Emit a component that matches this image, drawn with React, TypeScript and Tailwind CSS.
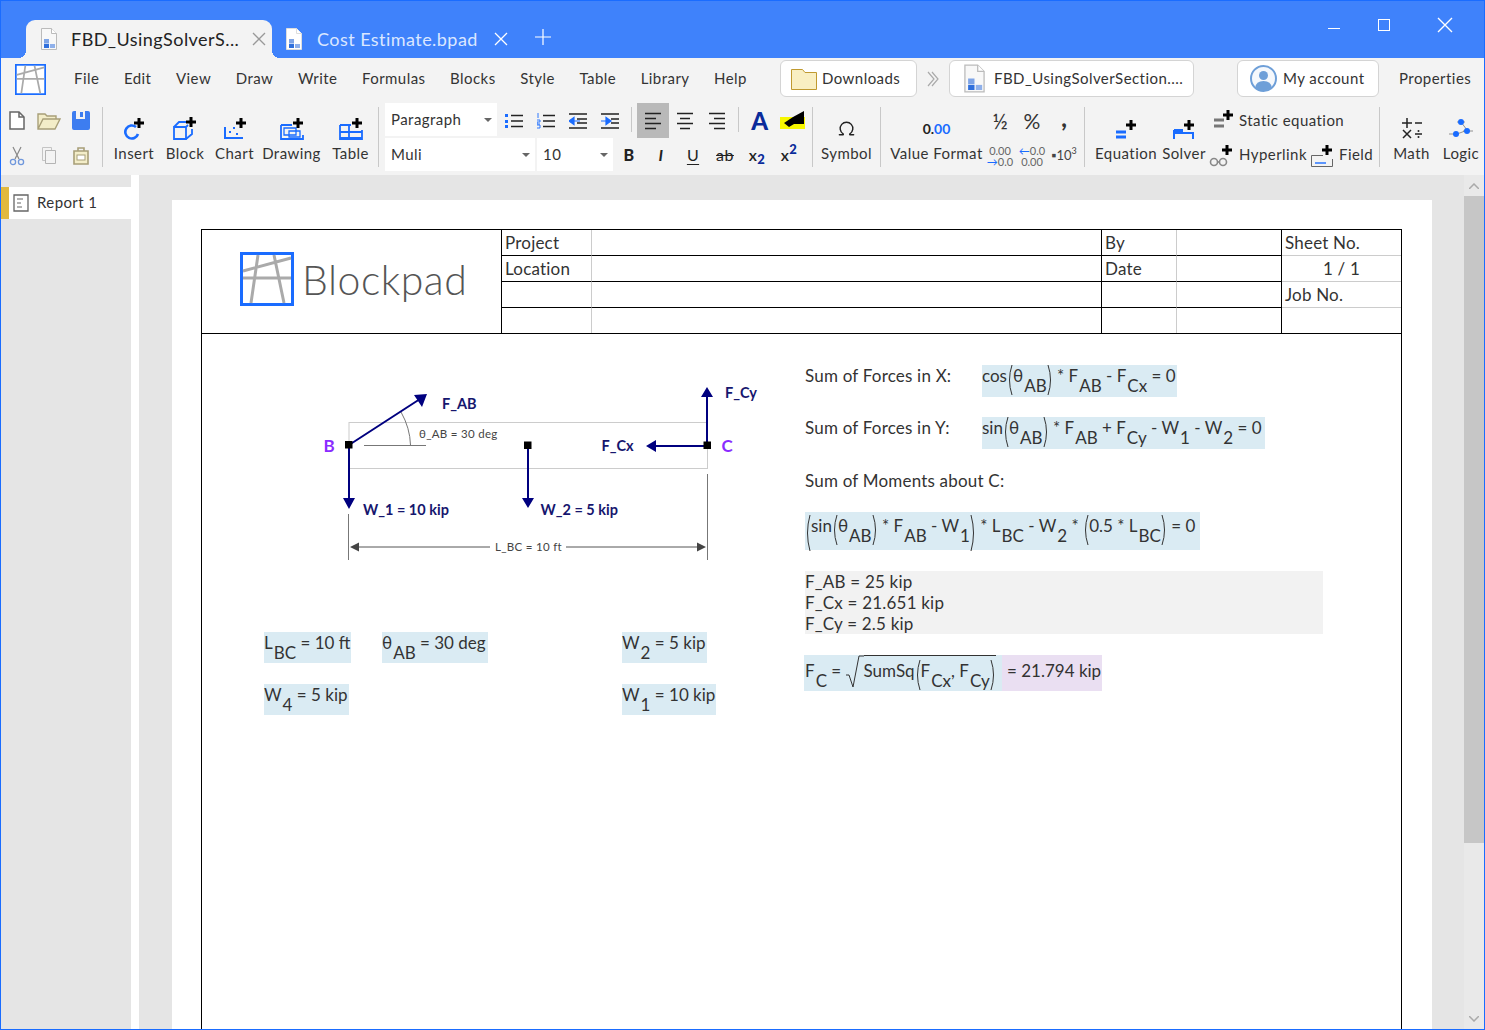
import type { ReactNode } from "react"
import { Omega } from "lucide-react"

const BLUE = "#1a6cff"

function Plus({ x, y, s = 10 }: { x: number; y: number; s?: number }) {
  return <path d={`M${x - s / 2} ${y}H${x + s / 2}M${x} ${y - s / 2}V${y + s / 2}`} stroke="#000" strokeWidth="3" fill="none" />
}

function Ico({ w = 24, h = 24, children }: { w?: number; h?: number; children: ReactNode }) {
  return (
    <svg width={w} height={h} viewBox={`0 0 ${w} ${h}`} fill="none" className="block shrink-0">
      {children}
    </svg>
  )
}

function DocIcon({ light = false, big = false }: { light?: boolean; big?: boolean }) {
  return (
    <svg width={big ? 23 : 18} height={big ? 29 : 22} viewBox="0 0 18 22" fill="none" className="block shrink-0">
      <path d="M1.5 .5H11.5L16.5 5.5V21.5H1.5Z" fill={light ? "#fff" : "#f8f8f8"} stroke={light ? "#ddd" : "#bbb"} />
      <path d="M11.5 .5V5.5H16.5" fill="#fff" stroke={light ? "#ddd" : "#bbb"} />
      <rect x="4" y="11" width="5" height="4.5" fill="#7ea4e6" />
      <rect x="4" y="16" width="5" height="4" fill="#2f6fdc" />
      <rect x="10" y="16" width="5" height="4" fill="#8fb0ea" />
    </svg>
  )
}

function LogoMark({ size }: { size: number }) {
  return (
    <svg width={size} height={size} viewBox="0 0 54 54" className="block shrink-0">
      <rect x="1.5" y="1.5" width="51" height="51" fill="#fff" stroke={BLUE} strokeWidth="3" />
      <g stroke="#aaa" strokeWidth="3" fill="none">
        <path d="M3 19L51 6M3 26H51M18 3L11 51M34 3L44 51" />
      </g>
    </svg>
  )
}

function Big({ w, label, icon }: { w: number; label: string; icon: ReactNode }) {
  return (
    <div className="flex flex-col items-center pt-[13px] shrink-0" style={{ width: w }}>
      <div className="flex h-[24px] items-center justify-center">{icon}</div>
      <div className="mt-[1px] h-[24px] text-[15px] leading-[24px] whitespace-nowrap text-[#333]">{label}</div>
    </div>
  )
}

function Cell({ w, active, children }: { w: number; active?: boolean; children: ReactNode }) {
  return (
    <div className={`flex h-[35px] shrink-0 items-center justify-center ${active ? "bg-[#b9b9b9]" : ""}`} style={{ width: w }}>
      {children}
    </div>
  )
}

function Lines({ kind }: { kind: "left" | "center" | "right" }) {
  const d = {
    left: "M0 1.5H16M0 6.5H11M0 11.5H16M0 16.5H11",
    center: "M0 1.5H16M3 6.5H13M0 11.5H16M3 16.5H13",
    right: "M0 1.5H16M5 6.5H16M0 11.5H16M5 16.5H16",
  }[kind]
  return (
    <Ico w={16} h={18}>
      <path d={d} stroke="#222" strokeWidth="1.5" />
    </Ico>
  )
}

function Select({ w, label }: { w: number; label: string }) {
  return (
    <div className="flex h-[33px] shrink-0 items-center justify-between bg-white pl-[6px] pr-[5px] text-[15px] text-[#333]" style={{ width: w }}>
      <span>{label}</span>
      <span className="h-0 w-0 border-x-[4px] border-t-[4px] border-x-transparent border-t-[#666]" />
    </div>
  )
}

function Sep({ short }: { short?: boolean }) {
  return <div className={`w-px shrink-0 bg-[#c8c8c8] ${short ? "mt-[4px] h-[25px]" : "mt-[4px] h-[60px]"}`} />
}

function Toolbar() {
  return (
    <div className="flex h-[72px] bg-[#f3f3f3]">
      {/* file actions */}
      <div className="grid w-[101px] shrink-0 grid-cols-[32px_32px_32px] grid-rows-[35px_35px] content-start pl-0">
        <div className="flex items-center justify-center">
          <Ico w={16} h={19}>
            <path d="M1 1H10L15 6V18H1Z" fill="#fff" stroke="#666" strokeWidth="1.5" />
            <path d="M10 1V6H15" stroke="#666" strokeWidth="1.5" />
          </Ico>
        </div>
        <div className="flex items-center justify-center">
          <Ico w={24} h={18}>
            <path d="M1 17V2H8L10 4H19V7H6L1 17L6 7H23L18 17Z" fill="#f3edc8" stroke="#a89f78" strokeWidth="1.4" />
          </Ico>
        </div>
        <div className="flex items-center justify-center">
          <Ico w={18} h={19}>
            <path d="M0 2Q0 0 2 0H4V8H13V0H16Q18 0 18 2V17Q18 19 16 19H2Q0 19 0 17Z" fill="#3d7df0" />
            <rect x="8" y="1" width="3" height="5" fill="#3d7df0" />
          </Ico>
        </div>
        <div className="flex items-center justify-center">
          <Ico w={16} h={20}>
            <path d="M4 1L10 13M12 1L6 13" stroke="#888" strokeWidth="1.2" />
            <circle cx="4" cy="16" r="2.6" stroke="#6f97dc" strokeWidth="1.3" />
            <circle cx="12" cy="16" r="2.6" stroke="#6f97dc" strokeWidth="1.3" />
          </Ico>
        </div>
        <div className="flex items-center justify-center">
          <Ico w={14} h={17}>
            <path d="M.5 .5H9.5V13.5H.5Z" stroke="#c4c4c4" fill="#f3f3f3" />
            <path d="M3.5 3.5H13.5V16.5H3.5Z" stroke="#b4b4b4" fill="#f3f3f3" />
          </Ico>
        </div>
        <div className="flex items-center justify-center">
          <Ico w={16} h={18}>
            <path d="M1 4H15V17H1Z" fill="#f3edc8" stroke="#a89f78" strokeWidth="1.6" />
            <path d="M5 4V1H11V4" stroke="#a89f78" strokeWidth="1.6" />
            <rect x="4" y="8" width="8" height="5" fill="#fff" stroke="#a89f78" />
          </Ico>
        </div>
      </div>
      <Sep />
      {/* insert group */}
      <div className="flex w-[275px] shrink-0 pl-[5px]">
        <Big w={52} label="Insert" icon={
          <Ico w={24} h={24}>
            <path d="M14 11A6.5 6.5 0 1 0 16 18" stroke={BLUE} strokeWidth="2.6" />
            <Plus x={17} y={7} />
          </Ico>
        } />
        <Big w={50} label="Block" icon={
          <Ico w={24} h={24}>
            <path d="M1 11H13V23H1ZM1 11L6 6H14M13 11L15 9M13 23L19 18V13" stroke={BLUE} strokeWidth="1.8" />
            <Plus x={18} y={6} />
          </Ico>
        } />
        <Big w={49} label="Chart" icon={
          <Ico w={24} h={24}>
            <path d="M2 11V22H20" stroke={BLUE} strokeWidth="2" />
            <path d="M6 15h2v2H6zM10 11h2v2h-2zM13 17h2v2h-2z" fill={BLUE} />
            <Plus x={18} y={7} />
          </Ico>
        } />
        <Big w={65} label="Drawing" icon={
          <Ico w={24} h={24}>
            <path d="M1 9V23H23V19M1 9H12" stroke={BLUE} strokeWidth="1.8" />
            <path d="M4 12H16V19H4ZM9 15H20V21H9Z" stroke={BLUE} strokeWidth="1.3" />
            <Plus x={18} y={7} />
          </Ico>
        } />
        <Big w={53} label="Table" icon={
          <Ico w={24} h={24}>
            <path d="M1 9H12M1 9V23H23V14M1 16H23M1 22H23M10 9V23" stroke={BLUE} strokeWidth="1.8" />
            <Plus x={18} y={7} />
          </Ico>
        } />
      </div>
      <Sep />
      {/* text formatting */}
      <div className="flex w-[433px] shrink-0 flex-col pl-[6px]">
        <div className="flex h-[35px] items-start">
          <Select w={112} label="Paragraph" />
          <div className="ml-[1px] flex">
            <Cell w={32}>
              <Ico w={18} h={16}>
                <path d="M0 1h3v3H0zM0 7h3v3H0zM0 12h3v3H0z" fill={BLUE} />
                <path d="M6 2.5H18M6 8H18M6 13.500H18" stroke="#222" strokeWidth="1.4" />
              </Ico>
            </Cell>
            <Cell w={32}>
              <Ico w={18} h={16}>
                <path d="M1 0V5M0 7H3V9H0V11H3M0 12H3V15H0" stroke={BLUE} strokeWidth=".9" />
                <path d="M6 2.500H18M6 8H18M6 13.500H18" stroke="#222" strokeWidth="1.4" />
              </Ico>
            </Cell>
            <Cell w={32}>
              <Ico w={18} h={16}>
                <path d="M0 1H18M8 6H18M8 10H18M0 15H18" stroke="#222" strokeWidth="1.4" />
                <path d="M0 8L5 4.500V11.500ZM4 8H11" fill={BLUE} stroke={BLUE} strokeWidth="1.2" />
              </Ico>
            </Cell>
            <Cell w={32}>
              <Ico w={18} h={16}>
                <path d="M0 1H18M10 6H18M10 10H18M0 15H18" stroke="#222" strokeWidth="1.4" />
                <path d="M10 8L5 4.500V11.500ZM0 8H7" fill={BLUE} stroke={BLUE} strokeWidth="1.2" />
              </Ico>
            </Cell>
          </div>
          <div className="ml-[5px] mr-[5px] mt-[4px] h-[25px] w-px bg-[#c8c8c8]" />
          <Cell w={32} active><Lines kind="left" /></Cell>
          <Cell w={32}><Lines kind="center" /></Cell>
          <Cell w={32}><Lines kind="right" /></Cell>
          <div className="ml-[5px] mr-[5px] mt-[4px] h-[25px] w-px bg-[#c8c8c8]" />
          <Cell w={32}><span className="text-[24px] font-black text-[#0a2a9a]">A</span></Cell>
          <Cell w={32}>
            <Ico w={25} h={19}>
              <rect x="0" y="6" width="25" height="12" fill="#f7f700" />
              <path d="M4 12L13 6L24 0V13H14L9 16Z" fill="#000" />
            </Ico>
          </Cell>
        </div>
        <div className="flex h-[37px] items-start gap-[2px] pt-[0px]">
          <Select w={150} label="Muli" />
          <Select w={76} label="10" />
          <div className="flex h-[33px] -ml-[2px] items-center text-[#222]">
            <span className="w-[32px] text-center text-[16px] font-black">B</span>
            <span className="w-[32px] text-center text-[16px] italic font-bold">I</span>
            <span className="w-[32px] text-center text-[16px] underline underline-offset-3">U</span>
            <span className="w-[32px] text-center text-[16px] line-through">ab</span>
            <span className="w-[32px] text-center text-[16px] font-semibold">x<sub className="text-[13px] font-black text-[#0a2a9a]">2</sub></span>
            <span className="w-[32px] text-center text-[16px] font-semibold">x<sup className="text-[13px] font-black text-[#0a2a9a]">2</sup></span>
          </div>
        </div>
      </div>
      <Sep />
      <Big w={67} label="Symbol" icon={<Omega className="h-[19px] w-[19px] text-[#222]" strokeWidth={1.8} />} />
      <Sep />
      {/* number formats */}
      <div className="flex w-[203px] shrink-0">
        <Big w={111} label="Value Format" icon={<span className="mt-[1px] text-[14px] font-bold tracking-normal text-[#222]">0.<span className="text-[#1a6cff]">00</span></span>} />
        <div className="-ml-[8px] grid w-[96px] grid-cols-[32px_32px_32px] grid-rows-[35px_35px] content-start tracking-normal text-[#333]">
          <div className="flex items-center justify-center text-[21px]">½</div>
          <div className="flex items-center justify-center text-[21px]">%</div>
          <div className="flex items-center justify-center pb-[6px] text-[24px] font-black">,</div>
          <div className="flex flex-col items-center justify-center text-[11px] leading-[11px] text-[#666]">
            <span>0.00</span>
            <span><span className="text-[#1a6cff]">→</span>0.0</span>
          </div>
          <div className="flex flex-col items-center justify-center text-[11px] leading-[11px] text-[#666]">
            <span><span className="text-[#1a6cff]">←</span>0.0</span>
            <span>0.00</span>
          </div>
          <div className="flex items-center justify-center text-[13px] text-[#444]">▪10<sup className="text-[9px]">3</sup></div>
        </div>
      </div>
      <Sep />
      {/* equation inserts */}
      <div className="flex w-[294px] shrink-0">
        <Big w={82} label="Equation" icon={
          <Ico w={24} h={24}>
            <path d="M2 16H12M2 21H12" stroke={BLUE} strokeWidth="3" />
            <Plus x={17} y={9} />
          </Ico>
        } />
        <Big w={34} label="Solver" icon={
          <Ico w={24} h={24}>
            <path d="M2 14H10V17H21V23M2 14V23" stroke={BLUE} strokeWidth="2" />
            <rect x="2" y="13" width="8" height="5" fill={BLUE} />
            <Plus x={17} y={9} />
          </Ico>
        } />
        <div className="flex flex-col">
          <div className="flex h-[34px] items-center pl-[12px]">
            <Ico w={21} h={22}>
              <path d="M1 11H11M1 17H11" stroke="#777" strokeWidth="3" />
              <Plus x={15} y={6} />
            </Ico>
            <span className="ml-[5px] text-[15px] whitespace-nowrap text-[#333]">Static equation</span>
          </div>
          <div className="flex h-[35px] items-center pl-[8px]">
            <Ico w={25} h={24}>
              <circle cx="5" cy="19" r="3.500" stroke="#888" strokeWidth="1.6" />
              <circle cx="14" cy="19" r="3.500" stroke="#888" strokeWidth="1.6" />
              <path d="M8 19H11" stroke="#888" strokeWidth="1.6" />
              <Plus x={18} y={7} />
            </Ico>
            <span className="ml-[5px] w-[66px] text-[15px] whitespace-nowrap text-[#333]">Hyperlink</span>
            <div className="ml-[6px]">
              <Ico w={22} h={24}>
                <path d="M.5 12.500H12M.5 12.500V23.500H21.500V16" stroke="#666" />
                <path d="M4 20H15" stroke={BLUE} strokeWidth="1.4" />
                <Plus x={16} y={7} />
              </Ico>
            </div>
            <span className="ml-[6px] text-[15px] text-[#333]">Field</span>
          </div>
        </div>
      </div>
      <Sep />
      <Big w={63} label="Math" icon={
        <Ico w={24} h={24}>
          <path d="M2 7H12M7 2V12M15 7H22M3 14L11 22M11 14L3 22M15 18H22" stroke="#222" strokeWidth="1.5" />
          <circle cx="18.500" cy="15" r="1" fill="#222" />
          <circle cx="18.500" cy="21" r="1" fill="#222" />
        </Ico>
      } />
      <Big w={36} label="Logic" icon={
        <Ico w={24} h={24}>
          <path d="M8 6H16M0 18H6M14 15H24M12 6L18 14M8 18L16 15" stroke="#777" strokeWidth=".8" />
          <circle cx="12" cy="6" r="3" fill={BLUE} />
          <circle cx="7" cy="18" r="3" fill={BLUE} />
          <circle cx="18" cy="15" r="3" fill={BLUE} />
        </Ico>
      } />
    </div>
  )
}

function Menu() {
  const items = ["File", "Edit", "View", "Draw", "Write", "Formulas", "Blocks", "Style", "Table", "Library", "Help"]
  return (
    <div className="flex h-[45px] items-center bg-[#f3f3f3] pb-[4px] text-[15px] text-[#333]">
      <div className="ml-[14px] mr-[28px] mt-[2px]"><LogoMark size={31} /></div>
      <div className="flex w-[706px] shrink-0 justify-between pr-[33px]">
        {items.map((item) => <span key={item}>{item}</span>)}
      </div>
      <div className="flex h-[37px] w-[137px] shrink-0 items-center gap-[5px] rounded-[6px] border border-[#d4d4d4] bg-white pl-[10px]">
        <Ico w={26} h={22}>
          <path d="M.5 1.500H11.500L14 4.500H25.500V21.500H.5Z" fill="#f9efc2" stroke="#c09a30" />
        </Ico>
        Downloads
      </div>
      <div className="flex w-[32px] shrink-0 justify-center">
        <svg width="12" height="16" viewBox="0 0 12 16" fill="none">
          <path d="M1 1L7 8L1 15M5 1L11 8L5 15" stroke="#aaa" strokeWidth="1.2" />
        </svg>
      </div>
      <div className="flex h-[37px] w-[245px] shrink-0 items-center gap-[8px] rounded-[6px] border border-[#d4d4d4] bg-white pl-[13px]">
        <DocIcon big />
        <span className="whitespace-nowrap">FBD_UsingSolverSection....</span>
      </div>
      <div className="ml-[43px] flex h-[37px] w-[142px] shrink-0 items-center gap-[6px] rounded-[6px] border border-[#d4d4d4] bg-white pl-[12px]">
        <svg width="27" height="27" viewBox="0 0 27 27" className="shrink-0">
          <circle cx="13.500" cy="13.500" r="12.500" fill="#f5f8fc" stroke="#6e9fd8" strokeWidth="2" />
          <circle cx="13.500" cy="10.500" r="4.500" fill="#6e9fd8" />
          <path d="M5 23Q6 16 13.500 16T22 23Q13 28 5 23Z" fill="#6e9fd8" />
        </svg>
        My account
      </div>
      <span className="ml-[20px] whitespace-nowrap">Properties</span>
    </div>
  )
}

function TitleBar() {
  return (
    <div className="relative flex h-[57px] items-end bg-[#3f82fb] pl-[25px] text-[18px]">
      <div className="relative flex h-[38px] w-[246px] shrink-0 items-center rounded-t-[9px] bg-[#f3f3f3] pl-[14px] text-[#222]">
        <span className="absolute bottom-0 left-[-8px] h-[8px] w-[8px] bg-[radial-gradient(circle_at_0_0,#3f82fb_8px,#f3f3f3_8px)]" />
        <span className="absolute bottom-0 right-[-8px] h-[8px] w-[8px] bg-[radial-gradient(circle_at_100%_0,#3f82fb_8px,#f3f3f3_8px)]" />
        <DocIcon />
        <span className="ml-[13px] w-[181px] whitespace-nowrap">FBD_UsingSolverS...</span>
        <svg width="14" height="14" viewBox="0 0 14 14" className="shrink-0"><path d="M1 1L13 13M13 1L1 13" stroke="#999" strokeWidth="1.3" /></svg>
      </div>
      <div className="flex h-[38px] shrink-0 items-center pl-[13px] text-[#dbe7ff]">
        <DocIcon light />
        <span className="ml-[14px] whitespace-nowrap">Cost Estimate.bpad</span>
        <svg width="14" height="14" viewBox="0 0 14 14" className="ml-[16px] shrink-0"><path d="M1 1L13 13M13 1L1 13" stroke="#fff" strokeWidth="1.3" /></svg>
        <svg width="16" height="16" viewBox="0 0 16 16" className="ml-[27px] mb-[4px] shrink-0"><path d="M0 8H16M8 0V16" stroke="#fff" strokeWidth="1.2" /></svg>
      </div>
      {/* window controls */}
      <div className="absolute right-[31px] top-[16px] flex items-center gap-[38px]">
        <svg width="12" height="12" viewBox="0 0 12 12"><path d="M0 9.500H12" stroke="#fff" /></svg>
        <svg width="12" height="12" viewBox="0 0 12 12"><rect x=".5" y=".5" width="11" height="11" fill="none" stroke="#fff" /></svg>
        <svg width="16" height="16" viewBox="0 0 16 16" className="ml-[9px]"><path d="M1 1L15 15M15 1L1 15" stroke="#fff" strokeWidth="1.4" /></svg>
      </div>
    </div>
  )
}

function Sheet() {
  const cell = "flex items-center pl-[3px] border-b border-black"
  const lastRow = "flex items-center pl-[3px]"
  return (
    <div className="grid h-[104px] grid-cols-[300px_90px_510px_75px_105px_119px] grid-rows-[26px_26px_26px_25px] border-b border-black text-[17px] leading-[26px] tracking-[0.2px] text-[#333]">
      <div className="row-span-4 flex items-center gap-[8px] border-r border-black pl-[38px] pb-[5px]">
        <LogoMark size={54} />
        <span className="mt-[2px] text-[41px] font-light tracking-[0.5px] text-[#555]">Blockpad</span>
      </div>
      <div className={`${cell} border-r border-r-[#ccc]`}>Project</div>
      <div className={`${cell} border-r border-r-black`} />
      <div className={`${cell} border-r border-r-[#ccc]`}>By</div>
      <div className={`${cell} border-r border-r-black`} />
      <div className="flex items-center border-b border-[#ccc] pl-[3px]">Sheet No.</div>
      <div className={`${cell} border-r border-r-[#ccc]`}>Location</div>
      <div className={`${cell} border-r border-r-black`} />
      <div className={`${cell} border-r border-r-[#ccc]`}>Date</div>
      <div className={`${cell} border-r border-r-black`} />
      <div className="flex items-center justify-center border-b border-[#ccc]">1 / 1</div>
      <div className={`${cell} border-r border-r-[#ccc]`} />
      <div className={`${cell} border-r border-r-black`} />
      <div className={`${cell} border-r border-r-[#ccc]`} />
      <div className={`${cell} border-r border-r-black`} />
      <div className="flex items-center border-b border-[#ccc] pl-[3px]">Job No.</div>
      <div className={`${lastRow} border-r border-[#ccc]`} />
      <div className={`${lastRow} border-r border-black`} />
      <div className={`${lastRow} border-r border-[#ccc]`} />
      <div className={`${lastRow} border-r border-black`} />
      <div />
    </div>
  )
}

function S({ children }: { children: ReactNode }) {
  return <span className="mt-[10px] ml-px">{children}</span>
}

function P({ right, h = 30 }: { right?: boolean; h?: number }) {
  return (
    <svg width="6" height={h} viewBox={`0 0 6 ${h}`} className="shrink-0">
      <path d={right ? `M1 0Q6 ${h / 2} 1 ${h}` : `M5 0Q0 ${h / 2} 5 ${h}`} stroke="#333" fill="none" />
    </svg>
  )
}

function Diagram() {
  const navy = "#00007f"
  return (
    <svg width="480" height="200" viewBox="300 370 480 200" className="absolute left-[98px] top-[36px]" fontFamily="Lato, sans-serif">
      <rect x="349" y="422.500" width="358.500" height="46" fill="none" stroke="#ccc" />
      <path d="M364 445.500H426" stroke="#777" />
      <path d="M401 412Q410 428 410.500 445" stroke="#777" fill="none" />
      <path d="M349 445L420 399M349 445V498M528 445V498M707 446H655M707 445V397" stroke={navy} strokeWidth="2" fill="none" />
      <path d="M427 394L414 395L422 407ZM343 498H355L349 509ZM522 498H534L528 508ZM646 446L656 440V452ZM707 387L701 397H713Z" fill={navy} />
      <rect x="345" y="441" width="7.500" height="7.500" fill="#000" />
      <rect x="524" y="441.500" width="7.500" height="7.500" fill="#000" />
      <rect x="703.500" y="441.500" width="7.500" height="7.500" fill="#000" />
      <path d="M348.500 514V560M707.500 474V560" stroke="#777" />
      <path d="M358 547H490M566 547H698" stroke="#555" />
      <path d="M350 547L359 542.500V551.500ZM706 547L697 542.500V551.500Z" fill="#444" />
      <g fill="#16166e" fontSize="14.500" fontWeight="700">
        <text x="442" y="409">F_AB</text>
        <text x="725" y="398">F_Cy</text>
        <text x="601.500" y="451">F_Cx</text>
        <text x="363" y="515">W_1 = 10 kip</text>
        <text x="540.500" y="515">W_2 = 5 kip</text>
      </g>
      <g fill="#8a2cff" fontSize="17" fontWeight="700">
        <text x="323.500" y="452">B</text>
        <text x="721.500" y="452">C</text>
      </g>
      <g fill="#444" fontSize="11.500" className="tracking-[0.3px]">
        <text x="419" y="438">θ_AB = 30 deg</text>
        <text x="495" y="551">L_BC = 10 ft</text>
      </g>
    </svg>
  )
}

function Blk({ className, children }: { className: string; children: ReactNode }) {
  return <div className={`absolute flex items-start whitespace-pre text-[17px] text-[#333] ${className}`}>{children}</div>
}

function Canvas() {
  return (
    <div className="relative h-[696px]">
      <Diagram />
      <Blk className="left-[603px] top-[31px] leading-[22px] tracking-[0.2px]">Sum of Forces in X:</Blk>
      <Blk className="left-[780px] top-[31px] h-[32px] w-[195px] bg-[#daebf3] leading-[22px]">
        cos<P />θ<S>AB</S><P right /> * F<S>AB</S> - F<S>Cx</S> = 0
      </Blk>
      <Blk className="left-[603px] top-[83px] leading-[22px] tracking-[0.2px]">Sum of Forces in Y:</Blk>
      <Blk className="left-[780px] top-[83px] h-[32px] w-[283px] bg-[#daebf3] leading-[22px]">
        sin<P />θ<S>AB</S><P right /> * F<S>AB</S> + F<S>Cy</S> - W<S>1</S> - W<S>2</S> = 0
      </Blk>
      <Blk className="left-[603px] top-[136px] leading-[22px] tracking-[0.2px]">Sum of Moments about C:</Blk>
      <Blk className="left-[603px] top-[178px] h-[38px] w-[395px] bg-[#daebf3] pt-[3px] leading-[22px]">
        <P h={36} />sin<P />θ<S>AB</S><P right /> * F<S>AB</S> - W<S>1</S><P right h={36} /> * L<S>BC</S> - W<S>2</S> * <P />0.5 * L<S>BC</S><P right /> = 0
      </Blk>
      <div className="absolute left-[603px] top-[237px] h-[63px] w-[518px] bg-[#f2f2f2] text-[17px] leading-[21px] tracking-[0.2px] text-[#333]">
        <div>F_AB = 25 kip</div>
        <div>F_Cx = 21.651 kip</div>
        <div>F_Cy = 2.5 kip</div>
      </div>
      <Blk className="left-[602px] top-[321px] h-[36px] w-[198px] bg-[#daebf3] pl-[1px] pt-[5px] leading-[22px]">
        F<S>C</S> = <svg width="18" height="32" viewBox="0 0 18 32" className="shrink-0 -mt-[5px]"><path d="M0 20H3L7 32L13 1H18" stroke="#333" fill="none" /></svg>
        <span className="flex border-t border-[#333] -mt-[5px] pt-[4px]">SumSq<P />F<S>Cx</S>, F<S>Cy</S><P right /></span>
      </Blk>
      <Blk className="left-[800px] top-[321px] h-[36px] w-[100px] bg-[#eadff2] pl-[5px] pt-[5px] leading-[22px]">= 21.794 kip</Blk>
      <Blk className="left-[62px] top-[298px] h-[31px] w-[87px] bg-[#daebf3] leading-[21px]">L<S>BC</S> = 10 ft</Blk>
      <Blk className="left-[180px] top-[298px] h-[31px] w-[106px] bg-[#daebf3] leading-[21px]">θ<S>AB</S> = 30 deg</Blk>
      <Blk className="left-[420px] top-[298px] h-[31px] w-[85px] bg-[#daebf3] leading-[21px]">W<S>2</S> = 5 kip</Blk>
      <Blk className="left-[62px] top-[350px] h-[31px] w-[85px] bg-[#daebf3] leading-[22px]">W<S>4</S> = 5 kip</Blk>
      <Blk className="left-[420px] top-[350px] h-[31px] w-[94px] bg-[#daebf3] leading-[22px]">W<S>1</S> = 10 kip</Blk>
    </div>
  )
}

export default function App() {
  return (
    <div className="relative flex h-[1030px] w-[1485px] flex-col overflow-hidden border border-[#1a6cff] font-['Lato',sans-serif]">
      {/* strip along the top edge */}
      <div className="absolute left-[598px] top-[-1px] flex h-px">
        <div className="w-[120px] bg-[#e8e8e8]" />
        <div className="w-[60px] bg-[#0a6cc4]" />
        <div className="w-[121px] bg-[#e8e8e8]" />
      </div>
      <div className="tracking-[0.45px]">
        <TitleBar />
        <Menu />
        <Toolbar />
      </div>
      <div className="flex min-h-0 flex-1">
        <div className="w-[130px] shrink-0 bg-[#e5e5e5] pt-[12px]">
          <div className="flex h-[32px] items-center border-l-[8px] border-[#e2b93f] bg-white pb-[1px] pl-[4px] text-[15px] tracking-[0.4px] text-[#333]">
            <Ico w={16} h={18}>
              <path d="M1 1H15V17H1Z" stroke="#666" strokeWidth="1.3" fill="#fff" />
              <path d="M4 5H10M4 9H8M4 13H9" stroke="#666" strokeWidth="1.2" />
            </Ico>
            <span className="ml-[8px]">Report 1</span>
          </div>
        </div>
        <div className="w-[8px] shrink-0 bg-white" />
        <div className="min-w-0 flex-1 overflow-hidden bg-[#e5e5e5] pl-[33px] pt-[25px]">
          <div className="h-[900px] w-[1260px] bg-white pl-[29px] pt-[29px]">
            <div className="h-[900px] w-[1201px] border-x border-t border-black">
              <Sheet />
              <Canvas />
            </div>
          </div>
        </div>
        {/* scrollbar */}
        <div className="flex w-[20px] shrink-0 flex-col items-center bg-[#e9e9e9]">
          <div className="flex h-[21px] items-center text-[#999]">
            <svg width="10" height="6" viewBox="0 0 10 6"><path d="M0 6L5 1L10 6" stroke="#aaa" strokeWidth="1.500" fill="none" /></svg>
          </div>
          <div className="h-[647px] w-full bg-[#c6c6c6]" />
          <div className="mt-auto flex h-[21px] items-center">
            <svg width="10" height="6" viewBox="0 0 10 6"><path d="M0 0L5 5L10 0" stroke="#aaa" strokeWidth="1.500" fill="none" /></svg>
          </div>
        </div>
      </div>
    </div>
  )
}
